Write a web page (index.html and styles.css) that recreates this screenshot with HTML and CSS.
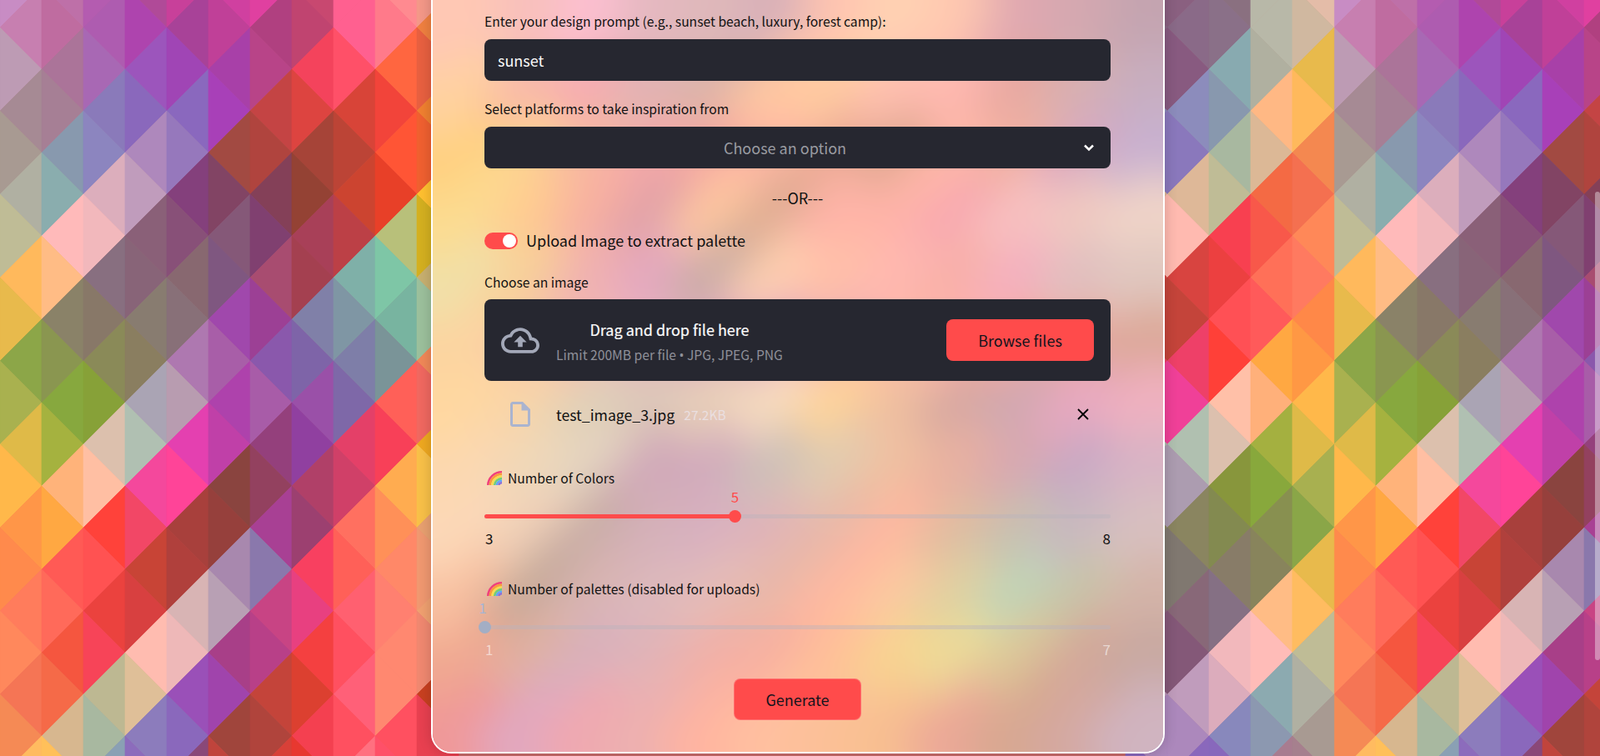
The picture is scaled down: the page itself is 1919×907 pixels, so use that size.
FILE: index.html
```html
<!DOCTYPE html>
<html lang="en">
<head>
  <meta charset="UTF-8">
  <meta name="viewport" content="width=device-width, initial-scale=1.0">
  <title>Palette Generator</title>
  <link rel="stylesheet" href="styles.css">
</head>
<body>

<!-- Tiled triangle backdrop, filled in by mosaic.js -->
<svg id="mosaic" class="mosaic" width="1919" height="907" aria-hidden="true"></svg>

<main class="card">
  <svg id="glow" class="glow" viewBox="0 0 880 947" preserveAspectRatio="none" aria-hidden="true"></svg>

  <div class="content">
    <!-- Prompt -->
    <label class="field-label" for="prompt">Enter your design prompt (e.g., sunset beach, luxury, forest camp):</label>
    <input class="text-input" id="prompt" type="text" value="sunset">

    <!-- Platforms -->
    <div class="field-label spaced">Select platforms to take inspiration from</div>
    <div class="select">
      <span class="select-text">Choose an option</span>
      <svg class="chevron" width="14" height="10" viewBox="0 0 14 10"><path d="M2 2.5 7 7.5 12 2.5" fill="none" stroke="#fafafa" stroke-width="2.6"/></svg>
    </div>

    <div class="divider">---OR---</div>

    <!-- Upload -->
    <div class="toggle-row">
      <span class="toggle"><span class="knob"></span></span>
      <span class="toggle-text">Upload Image to extract palette</span>
    </div>

    <div class="field-label choose">Choose an image</div>
    <div class="uploader">
      <svg class="cloud" width="46" height="31" viewBox="0 4 24 16"><path fill="#a3a8b8" d="M19.35 10.04C18.67 6.59 15.64 4 12 4 9.11 4 6.6 5.64 5.35 8.04 2.34 8.36 0 10.91 0 14c0 3.31 2.69 6 6 6h13c2.76 0 5-2.24 5-5 0-2.64-2.05-4.78-4.65-4.96zM19 18H6c-2.21 0-4-1.79-4-4 0-2.05 1.53-3.76 3.56-3.97l1.07-.11.5-.95C8.08 7.14 9.94 6 12 6c2.62 0 4.88 1.86 5.39 4.43l.3 1.5 1.53.11c1.56.1 2.78 1.41 2.78 2.96 0 1.65-1.35 3-3 3zM8 13h2.55v3h2.9v-3H16l-4-4z"/></svg>
      <div class="drop-text">
        <div class="drop-title">Drag and drop file here</div>
        <div class="drop-limit">Limit 200MB per file <span class="dot">•</span> JPG, JPEG, PNG</div>
      </div>
      <button class="btn browse">Browse files</button>
    </div>

    <div class="file-row">
      <svg class="file-icon" width="24" height="30" viewBox="4 2 16 20"><path fill="#aab4cf" d="M14 2H6c-1.1 0-1.99.9-1.99 2L4 20c0 1.1.89 2 1.99 2H18c1.1 0 2-.9 2-2V8l-6-6zM6 20V4h7v5h5v11H6z"/></svg>
      <span class="file-name">test_image_3.jpg</span>
      <span class="file-size">27.2KB</span>
      <svg class="close" width="14" height="14" viewBox="0 0 14 14"><path d="M1 1 13 13M13 1 1 13" stroke="#000" stroke-width="1.8"/></svg>
    </div>

    <!-- Sliders -->
    <div class="slider-block first">
      <div class="slider-label">
        <svg class="rainbow" width="18" height="17" viewBox="0 0 18 17" fill="none" stroke-width="2.6">
          <path d="M1.3 17A16.7 16 0 0 1 18 1.3" stroke="#f0407c"/>
          <path d="M3.9 17A14.1 13.4 0 0 1 18 3.9" stroke="#fb9a3c"/>
          <path d="M6.5 17A11.5 10.8 0 0 1 18 6.5" stroke="#f6dc50"/>
          <path d="M9.1 17A8.9 8.2 0 0 1 18 9.1" stroke="#6fcf7a"/>
          <path d="M11.7 17A6.3 5.6 0 0 1 18 11.7" stroke="#60a5fa"/>
          <path d="M14.3 17A3.7 3 0 0 1 18 14.3" stroke="#8b6fd8"/>
        </svg>
        Number of Colors
      </div>
      <div class="track">
        <div class="track-fill" style="width: 40%"></div>
        <span class="thumb" style="left: 40%"></span>
        <span class="thumb-value" style="left: 40%">5</span>
      </div>
      <div class="ticks"><span>3</span><span>8</span></div>
    </div>

    <div class="slider-block disabled">
      <div class="slider-label">
        <svg class="rainbow" width="18" height="17" viewBox="0 0 18 17" fill="none" stroke-width="2.6">
          <path d="M1.3 17A16.7 16 0 0 1 18 1.3" stroke="#f0407c"/>
          <path d="M3.9 17A14.1 13.4 0 0 1 18 3.9" stroke="#fb9a3c"/>
          <path d="M6.5 17A11.5 10.8 0 0 1 18 6.5" stroke="#f6dc50"/>
          <path d="M9.1 17A8.9 8.2 0 0 1 18 9.1" stroke="#6fcf7a"/>
          <path d="M11.7 17A6.3 5.6 0 0 1 18 11.7" stroke="#60a5fa"/>
          <path d="M14.3 17A3.7 3 0 0 1 18 14.3" stroke="#8b6fd8"/>
        </svg>
        Number of palettes (disabled for uploads)
      </div>
      <div class="track">
        <span class="thumb" style="left: 0"></span>
        <span class="thumb-value" style="left: 0">1</span>
      </div>
      <div class="ticks"><span>1</span><span>7</span></div>
    </div>

    <div class="actions">
      <button class="btn generate">Generate</button>
    </div>
  </div>
</main>

<!-- Page is scrolled, so only the thumb shows -->
<div class="scroll-thumb"></div>

<script src="mosaic.js"></script>
</body>
</html>
```

FILE: styles.css
```css
html, body {
  height: 907px;
  overflow: hidden;
}

body {
  margin: 0;
  font-family: 'Noto Sans CJK SC', 'Noto Sans', sans-serif;
  color: #111;
  background-color: #c86a6a;
  position: relative;
}

.mosaic {
  position: absolute;
  top: 0;
  left: 0;
}

.card {
  position: relative;
  box-sizing: border-box;
  width: 880px;
  margin: -42px 0 0 517px;
  border: 2px solid #fff;
  border-radius: 24px;
  overflow: hidden;
  box-shadow: 0 0 16px rgba(0, 0, 0, 0.18);
}

.glow {
  position: absolute;
  top: -2px;
  left: -2px;
  width: 880px;
  height: 947px;
}

.content {
  position: relative;
  padding: 56px 63px 38px 62px;
}

.field-label {
  display: block;
  padding-bottom: 2px;
  font-size: 15.65px;
  line-height: 20px;
}

.field-label.spaced {
  margin-top: 24px;
}

.field-label.choose {
  margin-top: 28px;
  padding-bottom: 1px;
}

.text-input,
.select {
  display: flex;
  align-items: center;
  box-sizing: border-box;
  width: 100%;
  height: 50px;
  margin-top: 9px;
  border: none;
  border-radius: 8px;
  background-color: #262730;
  font-family: inherit;
  font-size: 18px;
}

.text-input {
  padding: 0 16px 1px;
  color: #fafafa;
}

.select {
  position: relative;
  justify-content: center;
  padding: 0 30px 1px 0;
  color: #9a9ba1;
}

.chevron {
  position: absolute;
  right: 19px;
  top: 20px;
}

.divider {
  margin-top: 24px;
  padding-bottom: 2px;
  text-align: center;
  font-size: 18px;
  line-height: 22px;
}

.toggle-row {
  display: flex;
  align-items: center;
  gap: 10px;
  margin-top: 27px;
  height: 24px;
}

.toggle {
  display: flex;
  align-items: center;
  justify-content: flex-end;
  box-sizing: border-box;
  width: 40px;
  height: 20px;
  padding-right: 2px;
  border-radius: 10px;
  background-color: #ff4b4b;
}

.knob {
  width: 16px;
  height: 16px;
  border-radius: 50%;
  background-color: #fff;
}

.toggle-text {
  padding-bottom: 2px;
  font-size: 18px;
  line-height: 22px;
}

.uploader {
  display: flex;
  align-items: center;
  box-sizing: border-box;
  height: 98px;
  margin-top: 9px;
  padding: 0 20px;
  border-radius: 8px;
  background-color: #262730;
}

.cloud {
  flex: none;
  margin-right: 20px;
}

.drop-text {
  flex: 1;
  margin-top: 4px;
}

.drop-title,
.drop-limit {
  width: 272px;
  text-align: center;
  white-space: nowrap;
}

.drop-title {
  color: #fafafa;
  font-size: 18px;
  line-height: 24px;
  -webkit-text-stroke: 0.2px #fafafa;
}

.drop-limit {
  margin-top: 8px;
  color: #8f9099;
  font-size: 15.65px;
  line-height: 22px;
}

.dot {
  font-family: 'Noto Sans', sans-serif;
}

.btn {
  border: none;
  border-radius: 8px;
  background-color: #ff4b4b;
  color: #14141c;
  font-family: inherit;
  font-size: 18px;
  height: 50px;
}

.browse {
  width: 177px;
}

.file-row {
  display: flex;
  align-items: center;
  height: 50px;
  margin-top: 15px;
  padding-left: 31px;
}

.file-icon {
  flex: none;
  margin-right: 31px;
}

.file-name {
  font-size: 17.7px;
}

.file-size {
  margin-left: 11px;
  color: #eadfe0;
  font-size: 15.5px;
}

.close {
  margin-left: auto;
  margin-right: 26px;
}

.slider-block.first {
  margin-top: 40px;
}

.slider-block {
  margin-top: 38px;
}

.slider-label {
  display: flex;
  align-items: center;
  gap: 7px;
  height: 22px;
  padding-left: 3px;
  font-size: 15.65px;
}

.track {
  position: relative;
  height: 5px;
  margin-top: 33px;
  border-radius: 3px;
  background-color: rgba(185, 178, 188, 0.42);
}

.track-fill {
  height: 100%;
  border-radius: 3px;
  background-color: #ff4b4b;
}

.thumb {
  position: absolute;
  top: -5px;
  width: 15px;
  height: 15px;
  margin-left: -7.5px;
  border-radius: 50%;
  background-color: #ff4b4b;
}

.thumb-value {
  position: absolute;
  top: -31px;
  transform: translateX(-50%);
  color: #ff4b4b;
  font-size: 17px;
  line-height: 20px;
}

.ticks {
  display: flex;
  justify-content: space-between;
  margin-top: 13px;
  padding: 0 0 0 1px;
  font-size: 17px;
  line-height: 22px;
}

.disabled .thumb {
  background-color: #a3aec4;
}

.disabled .thumb-value {
  margin-left: -2px;
  color: #a8b4d0;
}

.disabled .ticks {
  color: rgba(255, 255, 255, 0.55);
}

.actions {
  display: flex;
  justify-content: center;
  margin-top: 24px;
}

.generate {
  width: 153px;
  border: 1px solid rgba(255, 255, 255, 0.2);
}

.scroll-thumb {
  position: absolute;
  top: 230px;
  right: 0;
  width: 6px;
  height: 562px;
  border-radius: 3px;
  background-color: rgba(250, 250, 250, 0.4);
}
```

FILE: mosaic.js
```js
// Colours of the backdrop triangles, one list per 50px column, top to bottom.
// Columns under the card are left out, they never show.
const strip28 = ['8a6080','8a6a88','885a80','8c8cbc','8a78bc','deb898','ffbab0','d84440','c4443a','ee4068','f04098','b0c0b0','ac9cb0','8a8560','807870','886878','845878','c09cbc','ac88bc','8a68bc'];

const strips = {
  0: ['c88cc4','c77fb0','bd9bb4','a68a94','a89a92','b0b0a2','bfbc96','ffb95c','e8ba4c','8ca648','a9b14f','dfba48','ffb84a','ff9648','ff8a4c','ff7c5c','ff885c','f57555','f58a55','ffbb60'],
  1: ['be70a8','bf6ca0','ab7499','a67f95','8899ae','8aadae','ffbaba','ffbc85','8a8268','8a9650','87a83e','a5b23f','ffb37a','ffa842','ff5a55','ff6a5a','f5563f','f56a48','d7b78f','ffc05a'],
  2: ['b45cb0','ae5cb0','a868b4','8a7aba','8c85bf','dcaebc','f2b8bc','886f80','887868','8a8a58','87a138','dcc0ad','ffbfa3','ff423a','ff5252','eb423e','f74458','bdb892','a8b8a0','8aa0b4'],
  3: ['b04a98','ae44ae','9c55bc','8a68bc','ae88bc','c09cbc','8a6078','886478','887c70','8a7e60','aaa4b4','b0c0b2','f4489c','f24766','c84436','d84040','ffbcb0','dfbf98','8c7cbc','8c6cbc'],
  4: ['c8409a','a84298','a045b5','8a68be','9678bc','84407c','885078','886870','887078','ae78b0','b89cb0','e440b0','ff4498','a8403c','b0403c','d8b4b4','eeb8b8','9a50b8','8a68bc','8a4878'],
  5: ['d040a0','c04098','a840a8','a840b8','a24a42','824464','855878','7f5780','a048ac','a85ea8','ae42ac','c040a8','8a443f','96403c','a888ae','b8a0b4','a83f88','a044ac','a0453c','c0443c'],
  6: ['e040a0','b04080','b84488','c44444','b0443e','844058','804070','a84c70','9c4095','8a58ac','a85ca8','94407c','93415f','a84094','8a78ac','c84484','b84088','c4443a','b0443c','d84038'],
  7: ['c84870','c04470','f4435c','dd4440','a64438','944234','a84058','a44050','8080a8','7e64a8','9a50a8','9040a0','b04068','9c4070','f84060','e84080','f44040','dc4030','f44050','e83830'],
  8: ['ff6090','ff6090','ff5068','d84438','bc4436','cc4430','bc4046','7fb0a8','7f96a4','7e7ea8','7e68a8','e44068','d04068','ff7060','ff6058','ff6070','ff5060','ff6078','ff5060','ff7080'],
  9: ['ff8a90','ff7a8a','ff6640','f2443a','ff5535','e84028','b8c07a','7ec6a6','78b4a0','7a9498','ff6058','f84058','ffac50','ff9058','ff8868','ff8070','ff8870','ff8870','ff5060','ff5068'],
  10: ['f49888','f08040','e86040','f08030','f06030','ffc030','d4b020','c8b070','9cc09c','f08858','f06860','eea820','f8c048','e8a070','f09870','f0a070','f08870','c84020','e84050','e84050'],
  27: strip28,
  28: strip28,
  29: ['8a7080','8a7088','88aab0','8898ae','a8b8a0','bfbc96','f84050','ec4040','ff5055','ff4038','ffc0a8','dcc0ae','88963c','838a50','887c68','857084','f2b8bc','dcacbc','8888bc','8868bc'],
  30: ['b8b8a8','b8b8a8','b0b0a0','ffb884','dcb896','f46a44','f8584a','ff7058','ff5a5a','ffa842','ffb07a','a4b040','88a83c','889050','88845c','ffbc85','ffbcb8','8caab0','8c98b0','a87c90'],
  31: ['e4bca8','d0b8a0','e8ba4c','ffb95c','f48850','f47050','ff8858','ff7a60','ff8848','ff9844','ffb84a','dfba48','a8b050','8aa648','e8ba4c','ffbc60','bfbc96','b0b0a2','a89a92','a6808e']
};

// Soft colour patches behind the card, 12 x 12 cells
const glowRows = [
  'ffc8b4 f8c0bc fcbfd0 e4b8c0 dfb8ba d8b0b8 ffc4b0 ffd2b2 ffc8b0 e0a8b0 d4a8b0 c4a4b0',
  'ffd2a0 f8b8a8 f6aab0 e0b4b4 dbb4a8 ffc8a0 ffcca0 ffbfb0 ffb8b0 e8a8a0 d8b0b0 c8aec0',
  'ffd080 fdd490 f8b8a0 f4a8a8 f4a8a0 ffb8a4 ecaa94 e0a890 ffb8a8 f0b0a0 d8a8c0 c8b0d0',
  'fcdc90 ffcc90 f8b0a0 e0a0a8 ffc8a0 dcaa90 ffb4a8 ffb4a8 f8a8b0 f8c0c0 f0c8c0 f0d4c8',
  'f0e0a8 f8d098 f0b0b0 e4a8c0 c8aca4 ffd0b0 ffc0a8 ffb8b0 f8b0a8 f4b0c0 e0c0c0 e0c8c0',
  'fcd4a0 f8c8a8 f4b8b0 e8b0c0 e0a8c0 e0a8c0 f0b0b0 ffb8a8 ffb0a8 f8a8a0 e8a8a0 dca898',
  'ffd8a0 f8d4a8 e0d0b8 dcc8b8 e8d0b8 f8dcc0 ffd498 f0c0a0 d8a8a0 d0a8b0 e8a8c0 f0b0c0',
  'fcd8b0 f0d8b8 e4d4c0 d0a8b8 d2aabc ccc0b8 e0ccb0 f0c0a0 e8b0a0 d8a8b0 c8a8c4 d8b4c4',
  'fcd8b8 f0d0b8 c8aca4 d4b0b8 d8b0c0 e0b4b8 e8b8a8 ffb8a0 e0bca0 c8c0b0 c8b8c0 d8c0c0',
  'f8c0a0 c4a898 d8b4b0 dcb8bc e4bcb8 e8b8a8 ffb8a0 fcc8a0 e0d0a0 c0d4b8 c8c4a8 d4b4a8',
  'f0a890 e0b0a0 d8b0bc e0b4b8 f0b0a8 f8b0a0 ffc098 f8d490 ecdc98 dcc898 d4a898 c8a8a0',
  'f09898 e0a8c0 f0a8b0 ecb0b0 ffb4a0 ffc0a0 fcc098 f8c090 eca898 d8a890 d4a8a0 d0b4c0'
];

const SVG_NS = 'http://www.w3.org/2000/svg';

function addShape(parent, tag, attrs) {
  const shape = document.createElementNS(SVG_NS, tag);
  for (const name in attrs) shape.setAttribute(name, attrs[name]);
  parent.appendChild(shape);
}

// One column of triangles. They alternate, apex on the left line or the right.
function drawStrip(svg, column, left) {
  strips[column].forEach(function (color, n) {
    const y = -17 + 50 * n;
    const apexLeft = (column + n) % 2 === 1;
    const ax = apexLeft ? left : left + 50;
    const bx = apexLeft ? left + 50 : left;
    addShape(svg, 'polygon', {
      points: ax + ',' + y + ' ' + bx + ',' + (y - 50) + ' ' + bx + ',' + (y + 50),
      fill: '#' + color,
      stroke: '#' + color,
      'stroke-width': 0.6
    });
  });
}

function drawMosaic() {
  const svg = document.getElementById('mosaic');
  // the picture repeats every 1600px
  for (const key in strips) {
    const column = Number(key);
    drawStrip(svg, column, column * 50);
    if (column * 50 + 1600 < 1919) drawStrip(svg, column, column * 50 + 1600);
  }
}

function drawGlow() {
  const svg = document.getElementById('glow');
  const defs = document.createElementNS(SVG_NS, 'defs');
  defs.innerHTML = '<filter id="soften" x="-10%" y="-10%" width="120%" height="120%"><feGaussianBlur stdDeviation="24"/></filter>';
  svg.appendChild(defs);
  const group = document.createElementNS(SVG_NS, 'g');
  group.setAttribute('filter', 'url(#soften)');
  svg.appendChild(group);

  const cellW = 880 / 12;
  const cellH = 907 / 12;
  glowRows.forEach(function (row, r) {
    row.split(' ').forEach(function (color, c) {
      // outer cells bleed past the edge so the blur stays solid there
      const x = c === 0 ? -80 : c * cellW;
      const w = c === 0 || c === 11 ? cellW + 80 : cellW;
      const y = r === 0 ? -80 : r * cellH + 40;
      const h = r === 0 ? cellH + 120 : r === 11 ? cellH + 80 : cellH;
      addShape(group, 'rect', { x: x, y: y, width: w + 1, height: h + 1, fill: '#' + color });
    });
  });

  // the smears in the card run up and to the right, lay each patch along that line
  glowRows.forEach(function (row, r) {
    row.split(' ').forEach(function (color, c) {
      const cx = (c + 0.5) * cellW;
      const cy = (r + 0.5) * cellH + 40;
      addShape(group, 'rect', {
        x: cx - 62,
        y: cy - 30,
        width: 124,
        height: 60,
        fill: '#' + color,
        transform: 'rotate(-45 ' + cx + ' ' + cy + ')'
      });
    });
  });
}

drawMosaic();
drawGlow();
```
